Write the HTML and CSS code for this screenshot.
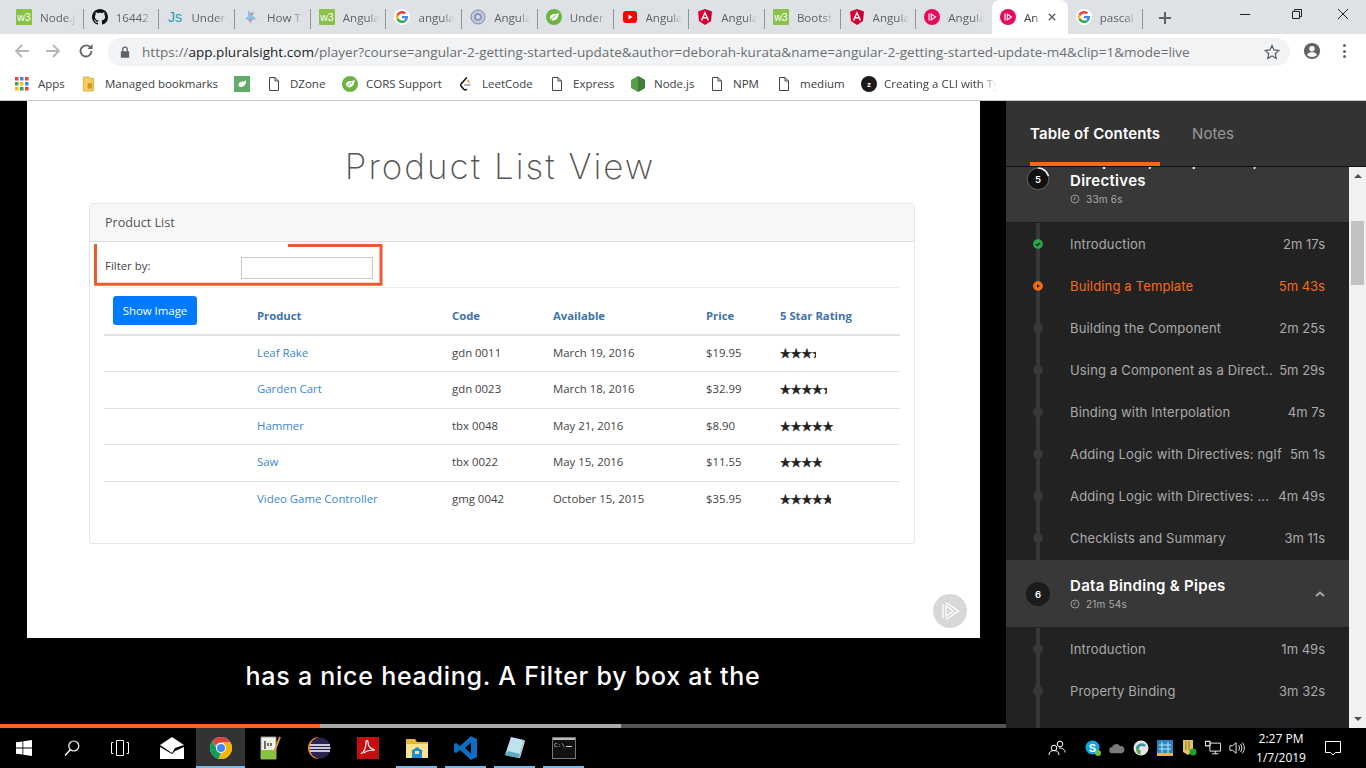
FILE: index.html

```html
<!DOCTYPE html>
<html lang="en">
<head>
  <meta charset="UTF-8">
  <title>Angular: Getting Started</title>
  <link rel="stylesheet" href="styles.css">
</head>
<body>
  <svg class="defs" width="0" height="0">
    <defs>
      <symbol id="w3" viewBox="0 0 16 16"><rect width="16" height="16" rx="1" fill="#8ac249"/><text x="8" y="12" font-family="Liberation Sans" font-size="10.5" text-anchor="middle" fill="#fff">w3</text></symbol>
      <symbol id="github" viewBox="0 0 16 16"><path fill="#111" d="M8 0C3.58 0 0 3.58 0 8c0 3.54 2.29 6.53 5.47 7.59.4.07.55-.17.55-.38 0-.19-.01-.82-.01-1.49-2.01.37-2.53-.49-2.69-.94-.09-.23-.48-.94-.82-1.13-.28-.15-.68-.52-.01-.53.63-.01 1.08.58 1.23.82.72 1.21 1.87.87 2.33.66.07-.52.28-.87.51-1.07-1.78-.2-3.64-.89-3.64-3.95 0-.87.31-1.59.82-2.15-.08-.2-.36-1.02.08-2.12 0 0 .67-.21 2.2.82.64-.18 1.32-.27 2-.27.68 0 1.36.09 2 .27 1.53-1.04 2.2-.82 2.2-.82.44 1.1.16 1.92.08 2.12.51.56.82 1.27.82 2.15 0 3.07-1.87 3.75-3.65 3.95.29.25.54.73.54 1.48 0 1.07-.01 1.93-.01 2.2 0 .21.15.46.55.38A8.013 8.013 0 0016 8c0-4.42-3.58-8-8-8z"/></symbol>
      <symbol id="js" viewBox="0 0 16 16"><text x="8" y="13" font-family="Liberation Sans" font-size="14" text-anchor="middle" fill="#21a0bd">Js</text></symbol>
      <symbol id="howto" viewBox="0 0 16 16"><path fill="#8cc4ee" d="M5 1l3 3 3-2-1 5 4 3-5 1-1 4-3-4-3-1 3-3z"/><path fill="#e8837a" d="M7 4h3v2H7zM6 10h3v2H6z"/></symbol>
      <symbol id="google" viewBox="0 0 16 16"><circle cx="8" cy="8" r="8" fill="#fff"/><path fill="#4285f4" d="M14 8.2c0-.5 0-.9-.1-1.3H8v2.4h3.4c-.2.8-.6 1.4-1.2 1.8l1.9 1.5c1.1-1 1.9-2.6 1.9-4.4z"/><path fill="#34a853" d="M8 14c1.6 0 3-.5 4.1-1.5l-1.9-1.5c-.6.4-1.3.6-2.2.6-1.6 0-3-1.1-3.5-2.5l-2 1.5C3.5 12.6 5.6 14 8 14z"/><path fill="#fbbc05" d="M4.5 9.1C4.2 8.4 4.2 7.6 4.5 6.900l-2-1.500c-.8 1.600-.8 3.600 0 5.200z"/><path fill="#ea4335" d="M8 4.400c.9 0 1.700.3 2.400.9l1.700-1.700C11 2.600 9.600 2 8 2 5.600 2 3.500 3.400 2.500 5.400l2 1.500C5 5.500 6.400 4.400 8 4.400z"/></symbol>
      <symbol id="gear" viewBox="0 0 16 16"><circle cx="8" cy="8" r="7" fill="#c6cbe0" stroke="#7d88ad"/><circle cx="8" cy="8" r="4" fill="#8e97b8"/><circle cx="8" cy="8" r="2" fill="#d9dcea"/></symbol>
      <symbol id="spring" viewBox="0 0 16 16"><circle cx="8" cy="8" r="8" fill="#6cb33f"/><path fill="#fff" d="M12.500 3.500c.5 4-1.500 8-5.500 8-1.500 0-3-1-3-3 0-3 3.500-3.500 5-3.500 1.500 0 2.500-.5 3.500-1.500z"/><path stroke="#6cb33f" fill="none" d="M4.500 11.500C6 9 8 7.500 10 6.500"/></symbol>
      <symbol id="youtube" viewBox="0 0 16 16"><rect x="1" y="2" width="14" height="12" rx="3" fill="#f00"/><path fill="#fff" d="M6.500 5.500l4 2.500-4 2.500z"/></symbol>
      <symbol id="angular" viewBox="0 0 16 16"><path fill="#dd0031" d="M8 0L1 2.500l1 9.500 6 4z"/><path fill="#c3002f" d="M8 0l7 2.500-1 9.500-6 4z"/><path fill="#fff" d="M8 2L3.800 11.500h1.600l.8-2.100h3.600l.8 2.100h1.600zm-1.200 6L8 5.200 9.200 8z"/></symbol>
      <symbol id="plural" viewBox="0 0 16 16"><circle cx="8" cy="8" r="8" fill="#e80a5c"/><path fill="none" stroke="#fff" stroke-width="1.100" d="M5 4.500v7M7.200 5v6l4.300-3z"/></symbol>
      <symbol id="doc" viewBox="0 0 10 14"><path fill="#fff" stroke="#444" d="M.5.500h5.500l3.500 3.500v9.500h-9z"/><path fill="none" stroke="#444" d="M6 .500V4h3.500"/></symbol>
      <symbol id="chromelogo" viewBox="0 0 24 24"><circle cx="12" cy="12" r="11" fill="#e5e5e5"/><path fill="#db4437" d="M12 1a11 11 0 019.500 5.500H12A5.500 5.500 0 006.800 10L3.400 5A11 11 0 0112 1z"/><path fill="#0f9d58" d="M3.400 5l4.500 8A5.500 5.500 0 0012 17.500L9.500 22.700A11 11 0 013.400 5z"/><path fill="#f4b400" d="M21.500 6.500A11 11 0 019.500 22.700l4.300-6.900a5.500 5.500 0 00-.3-9.300z"/><circle cx="12" cy="12" r="5" fill="#fff"/><circle cx="12" cy="12" r="4" fill="#4285f4"/></symbol>
      <symbol id="clock" viewBox="0 0 10 10"><circle cx="5" cy="5" r="4" fill="none" stroke="#999"/><path fill="none" stroke="#999" d="M5 2.800V5.200L3.300 6"/></symbol>
    </defs>
  </svg>

  <header class="browser">
    <div class="tabstrip">
      <div class="tab"><svg class="fav"><use href="#w3"/></svg><span class="tab-title">Node.j</span></div>
      <div class="tab"><svg class="fav"><use href="#github"/></svg><span class="tab-title">16442</span></div>
      <div class="tab"><svg class="fav"><use href="#js"/></svg><span class="tab-title">Under</span></div>
      <div class="tab"><svg class="fav"><use href="#howto"/></svg><span class="tab-title">How T</span></div>
      <div class="tab"><svg class="fav"><use href="#w3"/></svg><span class="tab-title">Angula</span></div>
      <div class="tab"><svg class="fav"><use href="#google"/></svg><span class="tab-title">angula</span></div>
      <div class="tab"><svg class="fav"><use href="#gear"/></svg><span class="tab-title">Angula</span></div>
      <div class="tab"><svg class="fav"><use href="#spring"/></svg><span class="tab-title">Under</span></div>
      <div class="tab"><svg class="fav"><use href="#youtube"/></svg><span class="tab-title">Angula</span></div>
      <div class="tab"><svg class="fav"><use href="#angular"/></svg><span class="tab-title">Angula</span></div>
      <div class="tab"><svg class="fav"><use href="#w3"/></svg><span class="tab-title">Bootst</span></div>
      <div class="tab"><svg class="fav"><use href="#angular"/></svg><span class="tab-title">Angula</span></div>
      <div class="tab tab-before-active"><svg class="fav"><use href="#plural"/></svg><span class="tab-title">Angula</span></div>
      <div class="tab tab-active"><svg class="fav"><use href="#plural"/></svg><span class="tab-title short">An</span>
        <svg class="tab-close" viewBox="0 0 10 10"><path d="M1 1l8 8M9 1l-8 8"/></svg></div>
      <div class="tab"><svg class="fav"><use href="#google"/></svg><span class="tab-title">pascal</span></div>
      <svg class="new-tab" viewBox="0 0 12 12"><path d="M6 0v12M0 6h12"/></svg>
      <div class="win-controls">
        <svg viewBox="0 0 10 10"><path d="M0 5.500h10"/></svg>
        <svg viewBox="0 0 10 10"><path d="M.5 2.500h7v7h-7zM2.500 2.500v-2h7v7h-2"/></svg>
        <svg viewBox="0 0 10 10"><path d="M0 0l10 10M10 0L0 10"/></svg>
      </div>
    </div>

    <div class="toolbar">
      <svg class="nav-icon faded" viewBox="0 0 16 16"><path d="M15 8H2M8 2L2 8l6 6"/></svg>
      <svg class="nav-icon faded" viewBox="0 0 16 16"><path d="M1 8h13M8 2l6 6-6 6"/></svg>
      <svg class="nav-icon reload" viewBox="0 0 16 16"><path d="M13.500 8a5.500 5.500 0 11-1.700-4"/><path class="solid" d="M14.500 1v5h-5z"/></svg>
      <div class="omnibox">
        <svg class="lock" viewBox="0 0 12 14"><path d="M2.500 6V4a3.500 3.500 0 017 0v2h1.500v8H1V6zM4 6h4V4a2 2 0 00-4 0z"/></svg>
        <span class="url">https://<b>app.pluralsight.com</b>/player?course=angular-2-getting-started-update&amp;author=deborah-kurata&amp;name=angular-2-getting-started-update-m4&amp;clip=1&amp;mode=live</span>
        <svg class="star" viewBox="0 0 16 16"><path d="M8 1.500l2 4.500 4.800.5-3.600 3.200 1 4.800L8 12l-4.200 2.500 1-4.800L1.200 6.500 6 6z"/></svg>
      </div>
      <svg class="avatar" viewBox="0 0 20 20"><circle cx="10" cy="10" r="9" fill="#5f6368"/><circle cx="10" cy="7.500" r="3" fill="#fff"/><path fill="#fff" d="M4.500 14.500c1-2.500 3.500-3 5.500-3s4.500.5 5.500 3c-1.500 1.500-3.500 2.200-5.500 2.200s-4-.7-5.500-2.200z"/></svg>
      <div class="menu-dots"><i></i><i></i><i></i></div>
    </div>

    <nav class="bookmarks">
      <a class="bm bm-apps"><svg class="bm-icon" viewBox="0 0 14 14"><g><rect width="3.500" height="3.500" fill="#ea4335"/><rect x="5" width="3.500" height="3.500" fill="#4285f4"/><rect x="10" width="3.500" height="3.500" fill="#ea4335"/><rect y="5" width="3.500" height="3.500" fill="#34a853"/><rect x="5" y="5" width="3.500" height="3.500" fill="#fbbc05"/><rect x="10" y="5" width="3.500" height="3.500" fill="#4285f4"/><rect y="10" width="3.500" height="3.500" fill="#fbbc05"/><rect x="5" y="10" width="3.500" height="3.500" fill="#34a853"/><rect x="10" y="10" width="3.500" height="3.500" fill="#ea4335"/></g></svg>Apps</a>
      <a class="bm bm-managed"><svg class="bm-icon" viewBox="0 0 14 16"><path fill="#f6cf5f" stroke="#d9ae3a" d="M1.500.5h6l1 1.500h4v13.500h-11z"/><path fill="#c99c2c" d="M6 7h5v6H6z"/></svg>Managed bookmarks</a>
      <a class="bm bm-leaf"><svg class="bm-icon wide" viewBox="0 0 16 16"><rect width="16" height="16" fill="#63ab6b"/><path fill="#fff" d="M12 4c.3 4-1.500 7-5 7-1 0-2.500-.5-2.500-2 0-3 3-3.500 4.500-3.500 1 0 2-.5 3-1.500z"/></svg></a>
      <a class="bm bm-dzone"><svg class="bm-icon doc"><use href="#doc"/></svg>DZone</a>
      <a class="bm bm-cors"><svg class="bm-icon wide"><use href="#spring"/></svg>CORS Support</a>
      <a class="bm bm-leet"><svg class="bm-icon" viewBox="0 0 14 16"><path fill="none" stroke="#222" stroke-width="1.800" d="M8.500 1L2.500 7.500a2 2 0 000 3l2.500 3a2.500 2.500 0 003.500 0"/><path fill="none" stroke="#e7a13d" stroke-width="1.800" d="M9 3.800l2.500 2.500"/><path stroke="#999" stroke-width="1.600" d="M5.500 9h7"/></svg>LeetCode</a>
      <a class="bm bm-express"><svg class="bm-icon doc"><use href="#doc"/></svg>Express</a>
      <a class="bm bm-node"><svg class="bm-icon wide" viewBox="0 0 16 16"><path fill="#5a9e4b" d="M8 0l7 4v8l-7 4-7-4V4z"/><path fill="#3f7e36" d="M8 0v16l7-4V4z"/></svg>Node.js</a>
      <a class="bm bm-npm"><svg class="bm-icon doc"><use href="#doc"/></svg>NPM</a>
      <a class="bm bm-medium"><svg class="bm-icon doc"><use href="#doc"/></svg>medium</a>
      <a class="bm bm-cli"><svg class="bm-icon wide" viewBox="0 0 16 16"><circle cx="8" cy="8" r="8" fill="#1b1b1b"/><text x="8" y="11" font-family="Liberation Sans" font-weight="700" font-size="8" text-anchor="middle" fill="#fff">z</text></svg><span class="bm-fade">Creating a CLI with Ty</span></a>
    </nav>
  </header>

  <main class="player">
    <section class="video">
      <div class="slide">
        <h1 class="slide-title">Product List View</h1>
        <div class="card">
          <div class="card-head">Product List</div>
          <div class="card-body">
            <div class="filter-row">
              <label class="filter-label">Filter by:</label>
              <input class="filter-input" type="text">
            </div>
            <table class="products">
              <thead>
                <tr><th class="img-col"><button class="show-btn">Show Image</button></th><th>Product</th><th>Code</th><th>Available</th><th>Price</th><th>5 Star Rating</th></tr>
              </thead>
              <tbody>
                <tr><td></td><td><a>Leaf Rake</a></td><td>gdn 0011</td><td>March 19, 2016</td><td>$19.95</td><td><span class="stars" style="width:36px">★★★★★</span></td></tr>
                <tr><td></td><td><a>Garden Cart</a></td><td>gdn 0023</td><td>March 18, 2016</td><td>$32.99</td><td><span class="stars" style="width:47px">★★★★★</span></td></tr>
                <tr><td></td><td><a>Hammer</a></td><td>tbx 0048</td><td>May 21, 2016</td><td>$8.90</td><td><span class="stars" style="width:54px">★★★★★</span></td></tr>
                <tr><td></td><td><a>Saw</a></td><td>tbx 0022</td><td>May 15, 2016</td><td>$11.55</td><td><span class="stars" style="width:42px">★★★★★</span></td></tr>
                <tr><td></td><td><a>Video Game Controller</a></td><td>gmg 0042</td><td>October 15, 2015</td><td>$35.95</td><td><span class="stars" style="width:51px">★★★★★</span></td></tr>
              </tbody>
            </table>
          </div>
          <svg class="callout" width="290" height="42" viewBox="0 0 290 42"><path d="M1.500 0v40.200h285.500V1.500H194"/></svg>
        </div>
        <div class="watermark"><svg viewBox="0 0 20 20"><path d="M3 3v14M6 4.500v11L13 10zM6 1.500L18.500 10 6 18.500"/></svg></div>
      </div>
      <p class="caption">has a nice heading. A Filter by box at the</p>
      <div class="progress"><span class="played"></span><span class="buffered"></span></div>
    </section>

    <aside class="sidebar">
      <div class="side-tabs">
        <span class="side-tab current">Table of Contents</span>
        <span class="side-tab">Notes</span>
      </div>
      <div class="side-scroll">
        <div class="toc">
          <div class="module first">
            <svg class="badge" viewBox="0 0 24 24"><circle cx="12" cy="12" r="12" fill="#111"/><circle cx="12" cy="12" r="11" fill="none" stroke="#555" stroke-width="1.600"/><path fill="none" stroke="#eee" stroke-width="1.600" d="M12 1a11 11 0 0110.500 8"/><text x="12" y="15.500" font-family="Inter" font-weight="600" font-size="9.500" text-anchor="middle" fill="#fff">5</text></svg>
            <div class="module-text">
              <h2>Templates, Interpolation, and Directives</h2>
              <div class="module-time"><svg class="clock"><use href="#clock"/></svg>33m 6s</div>
            </div>
          </div>
          <ol class="clips">
            <li class="clip done"><svg class="dot" viewBox="0 0 10 10"><circle cx="5" cy="5" r="5" fill="#28a745"/><path fill="none" stroke="#123" stroke-width="1.300" d="M2.800 5l1.600 1.600 2.800-3"/></svg><span class="clip-name">Introduction</span><span class="clip-time">2m 17s</span></li>
            <li class="clip now"><svg class="dot" viewBox="0 0 10 10"><circle cx="5" cy="5" r="5" fill="#f96816"/><path fill="#222" d="M4 3.200L7 5 4 6.800z"/></svg><span class="clip-name">Building a Template</span><span class="clip-time">5m 43s</span></li>
            <li class="clip"><i class="dot"></i><span class="clip-name">Building the Component</span><span class="clip-time">2m 25s</span></li>
            <li class="clip"><i class="dot"></i><span class="clip-name">Using a Component as a Direct...</span><span class="clip-time">5m 29s</span></li>
            <li class="clip"><i class="dot"></i><span class="clip-name">Binding with Interpolation</span><span class="clip-time">4m 7s</span></li>
            <li class="clip"><i class="dot"></i><span class="clip-name">Adding Logic with Directives: ngIf</span><span class="clip-time">5m 1s</span></li>
            <li class="clip"><i class="dot"></i><span class="clip-name">Adding Logic with Directives: ...</span><span class="clip-time">4m 49s</span></li>
            <li class="clip"><i class="dot"></i><span class="clip-name">Checklists and Summary</span><span class="clip-time">3m 11s</span></li>
          </ol>
          <div class="module">
            <svg class="badge" viewBox="0 0 24 24"><circle cx="12" cy="12" r="12" fill="#1c1c1c"/><text x="12" y="15.500" font-family="Inter" font-weight="600" font-size="9.500" text-anchor="middle" fill="#fff">6</text></svg>
            <div class="module-text">
              <h2>Data Binding &amp; Pipes</h2>
              <div class="module-time"><svg class="clock"><use href="#clock"/></svg>21m 54s</div>
            </div>
            <svg class="chevron" viewBox="0 0 10 6"><path d="M1 5l4-3.500L9 5"/></svg>
          </div>
          <ol class="clips">
            <li class="clip"><i class="dot"></i><span class="clip-name">Introduction</span><span class="clip-time">1m 49s</span></li>
            <li class="clip"><i class="dot"></i><span class="clip-name">Property Binding</span><span class="clip-time">3m 32s</span></li>
            <li class="clip"></li>
          </ol>
        </div>
        <div class="scrollbar">
          <span class="arrow up"></span>
          <span class="thumb"></span>
          <span class="arrow down"></span>
        </div>
      </div>
    </aside>
  </main>

  <footer class="taskbar">
    <div class="sys-btn"><svg class="tb-icon" viewBox="0 0 16 16"><path fill="#fff" d="M0 2.300l6.500-.9v6.200H0zM7.300 1.300L16 0v7.600H7.300zM0 8.400h6.500v6.200L0 13.700zM7.300 8.400H16V16l-8.700-1.200z"/></svg></div>
    <div class="sys-btn"><svg class="tb-icon" viewBox="0 0 16 16"><circle cx="9.800" cy="6" r="5" fill="none" stroke="#fff" stroke-width="1.200"/><path stroke="#fff" stroke-width="1.400" d="M6.300 9.700L1 15.500"/></svg></div>
    <div class="sys-btn"><svg class="tb-icon wide" viewBox="0 0 20 16"><path fill="none" stroke="#fff" d="M6.500 .5h7v15h-7zM3.500 2.500h-2v11h2M16.500 2.500h2v11h-2"/></svg></div>
    <div class="app mail-app"><svg class="tb-icon mail" viewBox="0 0 24 24"><path fill="#fff" d="M0 9L12 1l12 8-9 3-3 5L0 9zM0 11v12h24V11L15 15l-3 3z"/></svg></div>
    <div class="app active"><svg class="tb-icon large"><use href="#chromelogo"/></svg></div>
    <div class="app"><svg class="tb-icon large" viewBox="0 0 24 24"><path fill="#f2f2e6" stroke="#999" d="M3 1h15v22H3z"/><path fill="#86c440" d="M3 14h15v9H3z"/><path stroke="#444" stroke-width="1.500" d="M7 5v8M10 7v3M13 7v3"/><path stroke="#d99a2b" stroke-width="2" d="M22 1l-6 15"/></svg></div>
    <div class="app"><svg class="tb-icon large" viewBox="0 0 24 24"><path fill="#f7941e" d="M12 1a11 11 0 000 22 12 12 0 010-22z"/><circle cx="13" cy="12" r="10.500" fill="#2c2255"/><path stroke="#fff" stroke-width="1.500" d="M3 9h20M2.500 12h21M3 15h20"/></svg></div>
    <div class="app"><svg class="tb-icon large" viewBox="0 0 24 24"><rect x="1" y="1" width="22" height="22" fill="#c30f0f"/><path fill="none" stroke="#fff" stroke-width="1.200" d="M5 18c3-2 5-7 5-12 0-2 2-2 2 0 0 4 3 7 7 8-4 0-9 1-11 3"/></svg></div>
    <div class="app pinned"><svg class="tb-icon large" viewBox="0 0 24 24"><path fill="#e8b73a" d="M1 3h9l2 3h11v4H1z"/><path fill="#fbe38e" d="M1 8h22v14H1z"/><path fill="#1b90d8" d="M7 22v-7h3v3h4v-3h3v7z"/><path fill="#1b90d8" d="M6 15l6-4 6 4z"/></svg></div>
    <div class="app pinned"><svg class="tb-icon large" viewBox="0 0 24 24"><path fill="#0a6fc2" d="M17 0l6 3v18l-6 3L6 14l-4 3-2-1V8l2-1 4 3zM17 6.500L11 12l6 5.500z"/></svg></div>
    <div class="app pinned"><svg class="tb-icon large" viewBox="0 0 24 24"><path fill="#bfe3ee" d="M8 1l13 3-5 18-14-3z"/><path fill="#5fa9c4" d="M2 19l14 3 1-4-12-3z"/><path fill="#e6e6e6" d="M16 22l5-18 1 1-5 17z"/></svg></div>
    <div class="app pinned"><svg class="tb-icon large" viewBox="0 0 24 24"><rect x=".5" y="1.500" width="23" height="21" fill="#111" stroke="#777"/><path fill="#bbb" d="M1 2h22v2H1z"/><text x="2" y="11" font-family="Liberation Mono" font-size="6" fill="#ccc">C:\</text><path stroke="#ccc" d="M14 10.500h6"/></svg></div>

    <div class="tray">
      <svg class="tray-icon people" viewBox="0 0 18 18"><circle cx="6" cy="9" r="2.800" fill="none" stroke="#fff"/><circle cx="12" cy="5" r="2.800" fill="none" stroke="#fff"/><path fill="none" stroke="#fff" d="M1 16c0-3 2-4.500 5-4.500s5 1.500 5 4.500M11 9c3 0 6 1 6 4.500"/></svg>
      <svg class="tray-icon" viewBox="0 0 16 16"><circle cx="7.500" cy="7.500" r="7" fill="#12a5e4"/><text x="7.500" y="11.500" font-family="Liberation Sans" font-weight="700" font-size="11" text-anchor="middle" fill="#fff">S</text><circle cx="13" cy="13" r="3" fill="#7db93b"/></svg>
      <svg class="tray-icon" viewBox="0 0 18 14"><path fill="#7a7a7a" d="M4 13a3.500 3.500 0 01-.5-7A5 5 0 0112.500 5 4 4 0 0114 13z"/></svg>
      <svg class="tray-icon" viewBox="0 0 16 16"><circle cx="8" cy="8" r="7.500" fill="#e6e6e6"/><path fill="#3a8fb5" d="M3 8a6 6 0 0110-3l-2 2a3 3 0 00-5 1z"/><path fill="#5ba94c" d="M3 8l3 0a3 3 0 002 3l-1 4a7 7 0 01-4-7z"/></svg>
      <svg class="tray-icon" viewBox="0 0 16 16"><rect width="16" height="16" rx="1" fill="#2a86c5"/><path fill="none" stroke="#bfe6f7" d="M2 5h12M2 9h12M5 2v12M11 2v12"/><path fill="#e8b73a" d="M0 13h16v3H0z"/></svg>
      <svg class="tray-icon" viewBox="0 0 16 16"><path fill="#e4c468" d="M2 0h10v11l-5 4-5-3z"/><path stroke="#8d6f1f" d="M5 1v9M8 1v9"/><circle cx="12" cy="12" r="3.500" fill="#1fa02e"/></svg>
      <svg class="tray-icon" viewBox="0 0 18 16"><path fill="none" stroke="#fff" d="M5.500 2.500h12v9h-12zM11.500 11.500v3M8 14.500h7M.5.500h5v5h-5z"/><rect x=".5" y=".5" width="5" height="5" fill="#000" stroke="#fff"/></svg>
      <svg class="tray-icon" viewBox="0 0 18 16"><path fill="none" stroke="#fff" d="M1 5.500h3L8 2v12l-4-3.500H1zM11 5c1 2 1 4 0 6M13 3.500c2 3 2 6 0 9M15 2c3 4 3 8 0 12"/></svg>
      <div class="clock-area"><span>2:27 PM</span><span>1/7/2019</span></div>
      <div class="notify"><svg viewBox="0 0 16 16"><path fill="none" stroke="#fff" d="M.5 1.500h15v11h-5L8 15l-2.500-2.500h-5z"/></svg></div>
    </div>
  </footer>
</body>
</html>
```

FILE: styles.css

```css
* { box-sizing: border-box; }
html, body { margin: 0; padding: 0; }
body { width: 1366px; height: 768px; overflow: hidden; display: flex; flex-direction: column; background: #000; font-family: "Open Sans", "Noto Sans", sans-serif; }
.defs { position: absolute; }
svg { display: block; flex: none; }

/* browser chrome */
.browser { flex: none; background: #fff; }
.tabstrip { height: 34px; display: flex; align-items: stretch; padding-left: 8px; background: #dee1e6; }
.tab { width: 75.7px; flex: none; display: flex; align-items: center; padding-left: 8px; position: relative; }
.tab::after { content: ""; position: absolute; right: 0; top: 9px; height: 20px; width: 1px; background: #8f9398; }
.tab-before-active::after, .tab-active::after { display: none; }
.tab-active { background: #fff; border-radius: 8px 8px 0 0; }
.fav { width: 16px; height: 16px; }
.tab-title { width: 36px; margin-left: 8px; margin-top: 1px; overflow: hidden; white-space: nowrap; font-size: 11.600px; color: #5f6368; -webkit-mask-image: linear-gradient(90deg, #000 70%, transparent); mask-image: linear-gradient(90deg, #000 70%, transparent); }
.tab-title.short { width: 16px; color: #3c4043; }
.tab-close { width: 8px; height: 8px; margin-left: 8px; fill: none; stroke: #5f6368; stroke-width: 1.800; }
.new-tab { width: 12px; height: 12px; margin: 12px 0 0 16px; fill: none; stroke: #5f6368; stroke-width: 2; }
.win-controls { margin-left: auto; display: flex; gap: 36px; padding: 9px 18px 0 0; }
.win-controls svg { width: 10px; height: 10px; fill: none; stroke: #222; stroke-width: 1; }
.win-controls svg:nth-child(2) { margin-left: 6px; }

.toolbar { height: 34px; display: flex; align-items: center; padding-left: 14px; }
.nav-icon { width: 16px; height: 16px; margin-right: 15px; fill: none; stroke: #5f6368; stroke-width: 1.800; }
.nav-icon.faded { stroke: #b4b7ba; }
.nav-icon.reload { margin-left: 2px; }
.nav-icon .solid { fill: #5f6368; stroke: none; }
.omnibox { width: 1182px; height: 28px; margin-left: -1px; margin-top: 2px; border-radius: 14px; background: #f1f3f4; display: flex; align-items: center; padding-left: 12px; }
.lock { width: 10px; height: 12px; fill: #5f6368; }
.url { width: 1126px; margin-left: 12px; font-size: 13.500px; letter-spacing: .04px; white-space: nowrap; color: #6b6f73; }
.url b { font-weight: 400; color: #202124; }
.star { width: 16px; height: 16px; margin-left: -4px; fill: none; stroke: #5f6368; stroke-width: 1.300; }
.avatar { width: 18px; height: 18px; margin-left: 13px; }
.menu-dots { margin-left: 22px; display: flex; flex-direction: column; gap: 2.500px; }
.menu-dots i { width: 3px; height: 3px; border-radius: 50%; background: #5f6368; }

.bookmarks { height: 33px; display: flex; align-items: center; padding: 0 0 1px 15px; border-bottom: 1px solid #c9c9c9; font-size: 11.500px; color: #3c4043; }
.bm { display: flex; align-items: center; white-space: nowrap; }
.bm-icon { width: 13px; height: 16px; margin-right: 9px; }
.bm-icon.wide { width: 16px; margin-right: 8px; }
.bm-icon.doc { width: 10px; height: 14px; margin: 0 11px 0 1px; }
.bm-apps { width: 67px; } .bm-apps .bm-icon { width: 14px; }
.bm-managed { width: 152px; } .bm-managed .bm-icon { margin-right: 10px; }
.bm-leaf { width: 34px; }
.bm-dzone { width: 74px; }
.bm-cors { width: 117px; }
.bm-leet { width: 92px; } .bm-leet .bm-icon { margin-right: 10px; }
.bm-express { width: 79px; }
.bm-node { width: 81px; }
.bm-npm { width: 67px; }
.bm-medium { width: 83px; }
.bm-cli .bm-icon { margin-right: 7px; }
.bm-fade { width: 113px; overflow: hidden; -webkit-mask-image: linear-gradient(90deg, #000 85%, transparent); mask-image: linear-gradient(90deg, #000 85%, transparent); }

/* player */
.player { flex: none; height: 627px; display: flex; }
.video { width: 1006px; flex: none; display: flex; flex-direction: column; background: #000; }
.slide { position: relative; width: 953px; height: 537px; margin-left: 27px; background: #fff; }
.slide-title { margin: 0; height: 102px; padding: 43px 7px 0 0; text-align: center; font-family: Inter, sans-serif; font-weight: 200; font-size: 35px; line-height: 44px; letter-spacing: 2px; color: #555; }
.card { position: relative; width: 826px; height: 341px; margin-left: 62px; border: 1px solid #e6e6e6; border-radius: 3px; font-size: 11.400px; color: #444; }
.card-head { height: 38px; padding: 0 15px 1px; display: flex; align-items: center; background: #f7f7f8; border-bottom: 1px solid #dcdcdc; font-size: 12.600px; color: #555; }
.card-body { padding: 0 14px; }
.filter-row { height: 46px; display: flex; align-items: center; border-bottom: 1px solid #eee; }
.filter-label { width: 137px; padding: 2px 0 0 1px; }
.filter-input { width: 132px; height: 22px; margin: 6px 0 0; padding: 0; border: 1px solid #c8c8c8; background: #fff; }
.products { width: 796px; border-collapse: collapse; table-layout: fixed; }
.products th { height: 47px; padding: 0 0 10px; border-bottom: 2px solid #dee2e6; text-align: left; vertical-align: bottom; font-weight: 700; color: #3d74ab; font-size: 11.300px; line-height: 16px; }
.products th:nth-child(1) { width: 153px; }
.products th:nth-child(2) { width: 195px; }
.products th:nth-child(3) { width: 101px; }
.products th:nth-child(4) { width: 153px; }
.products th:nth-child(5) { width: 74px; }
.products th.img-col { padding: 8px 0 0 9px; vertical-align: top; }
.show-btn { width: 84px; height: 29px; padding: 0; border: 0; border-radius: 3px; background: #007bff; color: #fff; font: 11.400px "Open Sans", sans-serif; }
.products td { height: 36.500px; padding: 0 0 1px; border-top: 1px solid #dee2e6; line-height: 16px; }
.products tbody tr:first-child td { border-top: 0; }
.products a { color: #3b86d6; }
.stars { display: block; overflow: hidden; white-space: nowrap; font-family: "Noto Sans CJK SC", sans-serif; font-size: 10.700px; line-height: 14px; color: #222; -webkit-text-stroke: .4px #222; }
.callout { position: absolute; left: 4px; top: 40px; fill: none; stroke: #e85c2f; stroke-width: 3; }
.watermark { position: absolute; right: 13px; bottom: 10px; width: 34px; height: 34px; border-radius: 50%; background: #d8d8d8; display: flex; align-items: center; justify-content: center; }
.watermark svg { width: 20px; height: 20px; fill: none; stroke: #fff; stroke-width: 1.300; }
.caption { flex: 1; margin: 0; padding-bottom: 10px; display: flex; align-items: center; justify-content: center; font-family: Inter, sans-serif; font-weight: 500; font-size: 25px; color: #fff; letter-spacing: .75px; }
.progress { height: 4px; flex: none; background: #555; display: flex; }
.played { width: 320px; background: #f96816; }
.buffered { width: 301px; background: #aaa; }

/* sidebar */
.sidebar { width: 360px; flex: none; display: flex; flex-direction: column; background: #222; font-family: Inter, sans-serif; }
.side-tabs { height: 66px; flex: none; display: flex; gap: 32px; padding-left: 24px; background: #333; border-bottom: 1px solid #111; }
.side-tab { height: 65px; padding-top: 23px; font-size: 15px; line-height: 20px; color: #999; }
.side-tab.current { border-bottom: 4px solid #f96816; font-weight: 600; color: #fff; letter-spacing: .12px; }
.side-scroll { flex: 1; min-height: 0; display: flex; }
.toc { width: 343px; flex: none; overflow: hidden; }
.module { height: 68px; display: flex; align-items: center; background: #383838; border-bottom: 1px solid #1e1e1e; }
.module.first { height: 88px; margin-top: -32px; }
.badge { width: 24px; height: 24px; margin: 0 20px; }
.module-text { flex: 1; }
.module-text h2 { margin: 0; font-size: 15px; line-height: 20px; font-weight: 600; letter-spacing: .3px; color: #fff; width: 240px; }
.module-time { height: 16px; display: flex; align-items: center; gap: 6px; font-size: 10px; letter-spacing: .2px; color: #aaa; }
.clock { width: 10px; height: 10px; }
.chevron { width: 10px; height: 6px; margin-right: 24px; fill: none; stroke: #aaa; stroke-width: 2; }
.clips { position: relative; margin: 0; padding: 0 0 1px; list-style: none; }
.clips::before { content: ""; position: absolute; left: 30px; top: 0; bottom: 0; width: 4px; background: #383838; }
.clip { height: 42px; display: flex; align-items: center; gap: 7px; padding: 0 24px 0 27px; font-size: 13px; color: #aaa; }
.clip:nth-child(n) .dot { position: relative; width: 10px; height: 10px; margin-right: 20px; border-radius: 50%; background: #383838; flex: none; }
.clip svg.dot { background: none; }
.clip-name { flex: 1; min-width: 0; overflow: hidden; white-space: nowrap; letter-spacing: .16px; }
.clip-time { flex: none; }
.clip.now { color: #f96816; }
.scrollbar { width: 17px; flex: none; display: flex; flex-direction: column; align-items: center; background: #f1f1f1; position: relative; }
.arrow { width: 0; height: 0; border-left: 4px solid transparent; border-right: 4px solid transparent; }
.arrow.up { margin-top: 7px; border-bottom: 4px solid #505050; }
.arrow.down { margin-top: auto; margin-bottom: 7px; border-top: 4px solid #505050; }
.thumb { width: 13px; height: 64px; margin-top: 43px; background: #c1c1c1; }

/* windows taskbar */
.taskbar { height: 40px; flex: none; display: flex; background: #000; }
.sys-btn { width: 48px; flex: none; display: flex; align-items: center; justify-content: center; }
.tb-icon { width: 16px; height: 16px; }
.tb-icon.wide { width: 20px; }
.tb-icon.mail { width: 24px; height: 24px; }
.tb-icon.large { width: 24px; height: 24px; }
.app { position: relative; width: 49px; flex: none; display: flex; align-items: center; justify-content: center; }
.app.mail-app { width: 52px; padding-left: 4px; }
.app.active { background: #333; }
.app.active::after, .app.pinned::after { content: ""; position: absolute; left: 4px; right: 4px; bottom: 0; height: 2px; background: #76b9ed; }
.app.active::after { left: 0; right: 0; }
.tray { margin-left: auto; display: flex; align-items: center; padding-right: 13px; }
.tray-icon { width: 16px; height: 16px; margin: 0 4px; }
.tray-icon.people { width: 18px; height: 18px; margin: 0 15px 0 3px; }
.clock-area { width: 64px; display: flex; flex-direction: column; align-items: center; gap: 2px; font-size: 12px; line-height: 17px; color: #fff; }
.notify { width: 40px; display: flex; justify-content: center; }
.notify svg { width: 16px; height: 16px; }
```
